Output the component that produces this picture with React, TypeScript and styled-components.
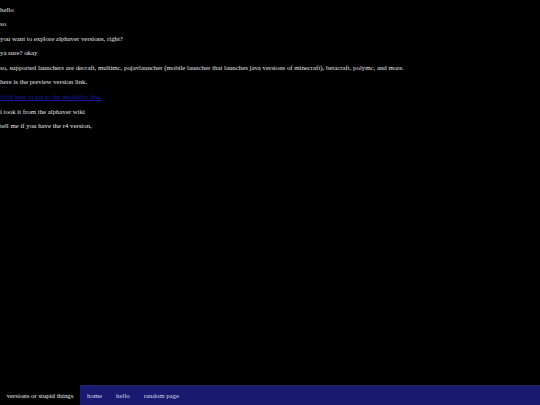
import React from "react";
import styled, { createGlobalStyle } from "styled-components";

const Global = createGlobalStyle`
  html, body { margin: 0; padding: 0; background: #000; }
  body { font-family: "Liberation Serif", "Times New Roman", serif; color: #e4e4e4; }
`;

const Page = styled.div`
  width: 540px;
  height: 405px;
  display: flex;
  flex-direction: column;
  background: #000;
  overflow: hidden;
`;

const Content = styled.main`
  flex: 1;
  padding: 5.5px 0 0 0;
`;

const Para = styled.p`
  margin: 0 0 6.6px 0;
  font-size: 6.8px;
  line-height: 8px;
  white-space: nowrap;
`;

const Link = styled.a`
  color: #1a1aa6;
  text-decoration: underline;
`;

const Nav = styled.nav`
  height: 20px;
  display: flex;
  align-items: stretch;
  font-size: 6.8px;
`;

const Brand = styled.div`
  width: 80px;
  display: flex;
  align-items: center;
  justify-content: center;
  color: #e8e8e8;
  background: #000;
`;

const Menu = styled.div`
  flex: 1;
  display: flex;
  align-items: center;
  gap: 14px;
  padding-left: 7px;
  background: #191970;
  border-top: 1px solid #2a1f66;
`;

const MenuItem = styled.a`
  color: #d4d4ec;
  text-decoration: none;
`;

const lines = [
  "hello",
  "so",
  "you want to explore alphaver versions, right?",
  "ya sure? okay",
  "so, supported launchers are decraft, multimc, pojavlauncher (mobile launcher that launches java versions of minecraft), betacraft, polymc, and more.",
  "here is the preview version link.",
];

export default function App() {
  return (
    <Page>
      <Global />
      <Content>
        {lines.map((l) => (
          <Para key={l}>{l}</Para>
        ))}
        <Para>
          <Link href="#">click here to get to the mediafire link.</Link>
        </Para>
        <Para>i took it from the alphaver wiki</Para>
        <Para>tell me if you have the r4 version,</Para>
      </Content>
      <Nav>
        <Brand>versions or stupid things</Brand>
        <Menu>
          <MenuItem href="#">home</MenuItem>
          <MenuItem href="#">hello</MenuItem>
          <MenuItem href="#">random page</MenuItem>
        </Menu>
      </Nav>
    </Page>
  );
}
